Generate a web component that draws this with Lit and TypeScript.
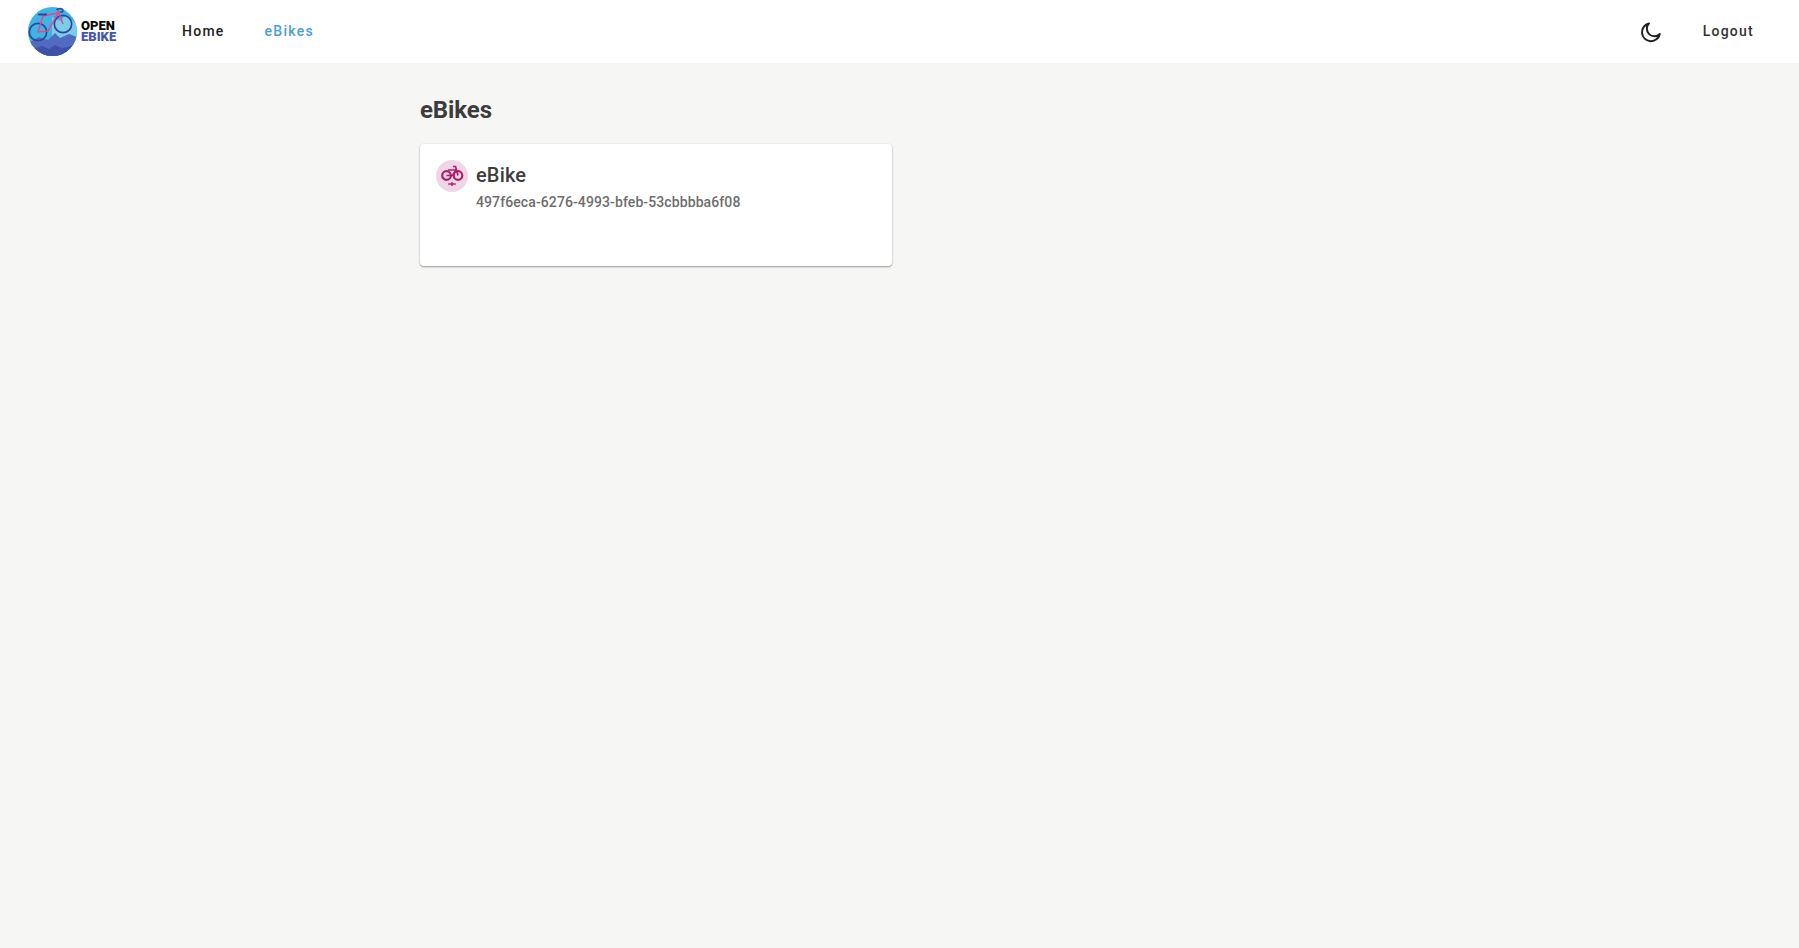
import { LitElement, html, css } from "lit";
import { customElement } from "lit/decorators.js";

@customElement("app-root")
export class AppRoot extends LitElement {
  static styles = css`
    :host {
      display: block;
      min-height: 948px;
      background: #f6f6f5;
      font-family: Roboto, "Liberation Sans", sans-serif;
      color: #3c3c3c;
    }
    .bar {
      height: 63px;
      background: #fff;
      display: flex;
      align-items: center;
      box-sizing: border-box;
      padding-left: 28px;
    }
    .logo { display: flex; align-items: center; width: 154px; }
    .logo svg { display: block; width: 49px; height: 49px; flex: none; }
    .logotext {
      margin-left: 4px;
      font-size: 13px;
      line-height: 11px;
      font-weight: 900;
      letter-spacing: 0;
      color: #0b0b0b;
      padding-bottom: 1px;
    }
    .logotext div + div { color: #4657a8; }
    .nav {
      font-size: 14px;
      font-weight: 500;
      letter-spacing: 1.25px;
      color: #212121;
      margin-right: 40px;
      padding-bottom: 2px;
    }
    .nav.active { color: #4a9fd4; }
    .spacer { flex: 1; }
    .moon { width: 24px; height: 24px; display: block; margin-right: 40px; }
    .logout { margin-right: 45px; color: #333; }
    main {
      padding: 31px 0 0 420px;
    }
    h1 {
      margin: 0 0 18px;
      font-size: 24px;
      line-height: 32px;
      font-weight: 700;
      letter-spacing: -0.1px;
      color: #3c3c3c;
    }
    .card {
      width: 472px;
      height: 122px;
      box-sizing: border-box;
      background: #fff;
      border-radius: 4px;
      box-shadow: 0 1px 2px rgba(0,0,0,.38), 0 0 2px rgba(0,0,0,.05);
      padding: 16px;
      display: flex;
      gap: 8px;
    }
    .avatar {
      width: 32px;
      height: 32px;
      border-radius: 50%;
      background: #f0d6e5;
      flex: none;
    }
    .avatar svg { width: 32px; height: 32px; display: block; }
    .title {
      font-size: 20px;
      line-height: 31px;
      font-weight: 500;
      letter-spacing: 0.15px;
      color: #3c3c3c;
    }
    .sub {
      font-size: 14px;
      line-height: 20px;
      font-weight: 500;
      letter-spacing: 0.1px;
      color: #6e6e6e;
      margin-top: 1px;
    }
  `;

  render() {
    return html`
      <div class="bar">
        <div class="logo">
          <svg viewBox="0 0 49 49">
            <defs>
              <clipPath id="c"><circle cx="24.5" cy="24.5" r="24.5" /></clipPath>
            </defs>
            <g clip-path="url(#c)">
              <rect width="49" height="49" fill="#3db4e6" />
              <path d="M24 10l8 4 6-6 11 10v18H24z" fill="#7ccdec" />
              <path d="M0 36l11-6 9 3 7-7 5 5 9-4 8 3v19H0z" fill="#4f6cc0" />
              <path d="M0 43l14-4 7 3 6-4 7 3 15-3v11H0z" fill="#3f50a8" />
            </g>
            <g fill="none" stroke="#2f4598" stroke-width="1.7">
              <circle cx="10" cy="25" r="8.7" />
              <circle cx="35" cy="17" r="8.7" />
            </g>
            <g fill="none" stroke="#e8468f" stroke-width="1.5" stroke-linejoin="round">
              <path d="M10 25L15 9 30 6 20 24z" />
              <path d="M35 17L29.500 2.500" />
            </g>
            <path d="M29 2.500c3-1.500 6-1 6 1s-2 1.500-2.500 1.500" fill="none" stroke="#2f4598" stroke-width="1.500" stroke-linecap="round" />
            <path d="M11 7.500h7" stroke="#2f4598" stroke-width="2.200" stroke-linecap="round" />
          </svg>
          <div class="logotext"><div>OPEN</div><div>EBIKE</div></div>
        </div>
        <div class="nav">Home</div>
        <div class="nav active">eBikes</div>
        <div class="spacer"></div>
        <svg class="moon" viewBox="0 0 24 24" fill="none" stroke="#212121" stroke-width="2" stroke-linejoin="round">
          <path d="M10 3.400A9 9 0 1 0 20.800 14 7.500 7.500 0 0 1 10 3.400z" />
        </svg>
        <div class="nav logout">Logout</div>
      </div>
      <main>
        <h1>eBikes</h1>
        <div class="card">
          <div class="avatar">
            <svg viewBox="0 0 32 32" fill="none" stroke="#ad1f6d" stroke-width="2.200">
              <circle cx="10.500" cy="15.500" r="4.300" />
              <circle cx="22" cy="15.500" r="4.300" />
              <path d="M10.500 15.500h6l3.500-5.500M12 10h8M17 6.500h2.500l2.500 9" stroke-width="1.700" />
              <path d="M12 24h8" stroke-width="1.200" />
              <path d="M16.500 22l-1.500 2h2l-1.500 2" stroke-width="1.200" />
            </svg>
          </div>
          <div>
            <div class="title">eBike</div>
            <div class="sub">497f6eca-6276-4993-bfeb-53cbbbba6f08</div>
          </div>
        </div>
      </main>
    `;
  }
}
